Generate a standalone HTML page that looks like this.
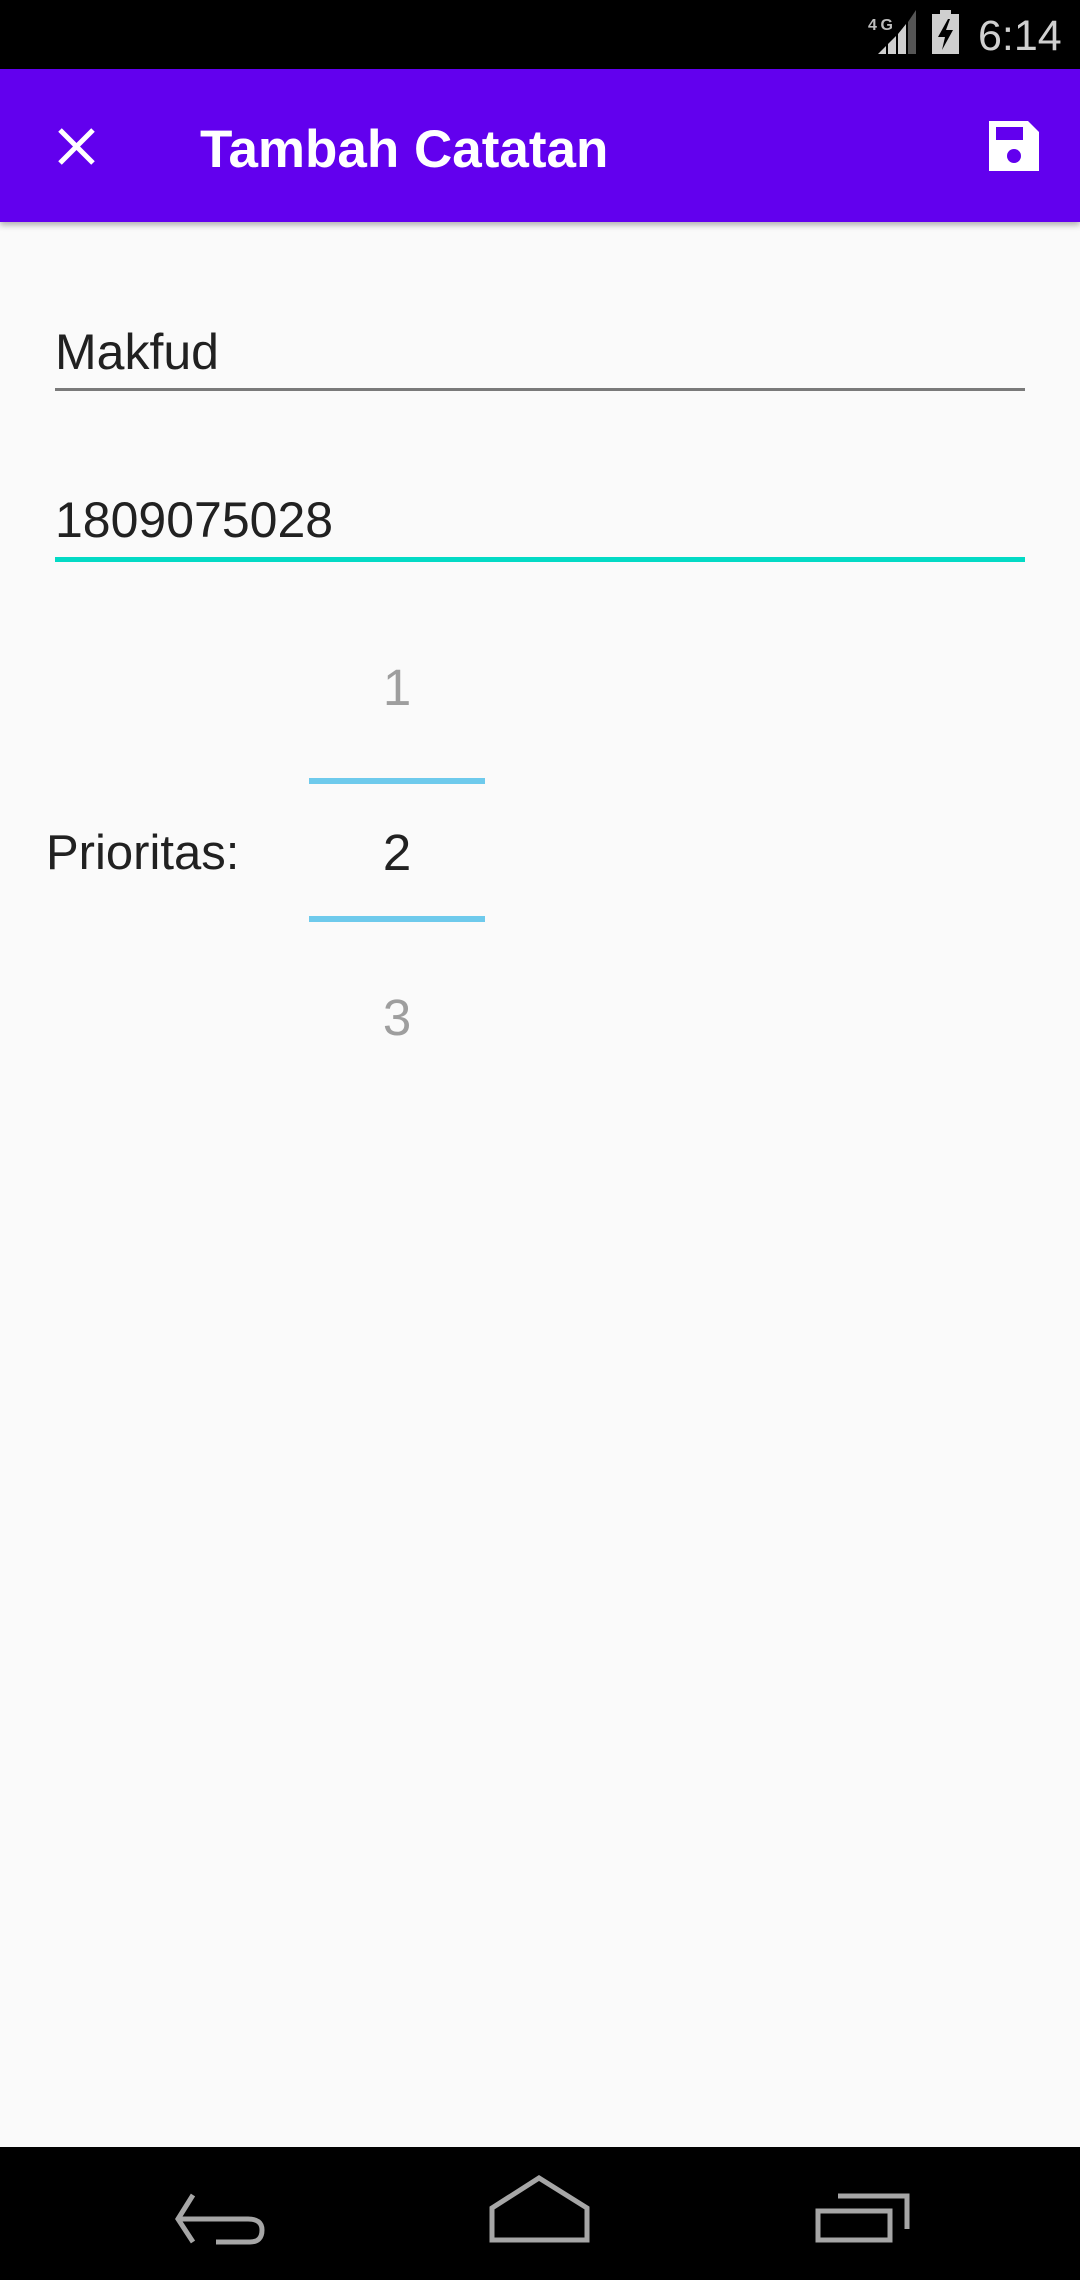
<!DOCTYPE html>
<html><head><meta charset="utf-8"><style>
*{margin:0;padding:0;box-sizing:border-box}
body{width:1080px;height:2280px;background:#fafafa;position:relative;overflow:hidden;font-family:"Liberation Sans",sans-serif}
.a{position:absolute;white-space:nowrap;line-height:1}
</style></head><body>
<div class="a" style="left:0;top:0;width:1080px;height:69px;background:#000"></div>
<svg class="a" style="left:865px;top:8px" width="100" height="50" viewBox="865 8 100 50">
<text x="868" y="30" font-family="Liberation Sans" font-weight="bold" font-size="16" fill="#bdbdbd" textLength="25">4G</text>
<polygon points="878,54 886,54 886,46" fill="#cfcfcf"/>
<polygon points="888,54 896,54 896,36 888,44" fill="#cfcfcf"/>
<polygon points="898,54 906,54 906,24 898,34" fill="#cfcfcf"/>
<polygon points="908,54 916,54 916,10 908,22" fill="#555"/>
<rect x="932" y="14" width="27" height="40" fill="#cfcfcf"/>
<rect x="940" y="10" width="11" height="5" fill="#cfcfcf"/>
<polygon points="948,19 938,37 945,37 942,50 953,30 946,30 950,19" fill="#000"/>
</svg>
<div class="a" style="left:978px;top:15px;font-size:43px;color:#d0d0d0">6:14</div>

<div class="a" style="left:0;top:69px;width:1080px;height:153px;background:#6200ee;box-shadow:0 3px 6px rgba(0,0,0,.3)"></div>
<svg class="a" style="left:57px;top:127px" width="39" height="39" viewBox="0 0 39 39"><path d="M3 3L36 36M36 3L3 36" stroke="#fff" stroke-width="5"/></svg>
<div class="a" style="left:200px;top:123px;font-size:53px;font-weight:bold;color:#fff">Tambah Catatan</div>
<svg class="a" style="left:989px;top:121px" width="50" height="50" viewBox="0 0 50 50"><path d="M0 0H39L50 11V50H0Z" fill="#fff"/><rect x="7" y="6" width="27" height="13" fill="#6200ee"/><circle cx="25" cy="35" r="7" fill="#6200ee"/></svg>

<div class="a" style="left:55px;top:327px;font-size:50px;color:#212121">Makfud</div>
<div class="a" style="left:55px;top:388px;width:970px;height:3px;background:#7a7a7a"></div>
<div class="a" style="left:55px;top:495px;font-size:50px;color:#212121">1809075028</div>
<div class="a" style="left:55px;top:557px;width:970px;height:5px;background:#03dac5"></div>

<div class="a" style="left:46px;top:829px;font-size:49px;color:#212121">Prioritas:</div>
<div class="a" style="left:309px;width:176px;text-align:center;top:662px;font-size:51px;color:#9e9e9e">1</div>
<div class="a" style="left:309px;top:778px;width:176px;height:6px;background:#6ecaec"></div>
<div class="a" style="left:309px;width:176px;text-align:center;top:827px;font-size:51px;color:#212121">2</div>
<div class="a" style="left:309px;top:916px;width:176px;height:6px;background:#6ecaec"></div>
<div class="a" style="left:309px;width:176px;text-align:center;top:992px;font-size:51px;color:#9e9e9e">3</div>

<div class="a" style="left:0;top:2147px;width:1080px;height:133px;background:#000"></div>
<svg class="a" style="left:0;top:2147px" width="1080" height="133" viewBox="0 2147 1080 133">
<g fill="none" stroke="#a6a6a6" stroke-width="5">
<path d="M193 2195L178 2219L193 2242M178 2219H248Q262 2219 262 2230Q262 2242 250 2242H216"/>
<path d="M492 2240V2208L539 2178L587 2208V2240Z"/>
<rect x="818" y="2211" width="72" height="29"/>
<path d="M838 2196H907V2229"/>
</g>
</svg>
</body></html>
